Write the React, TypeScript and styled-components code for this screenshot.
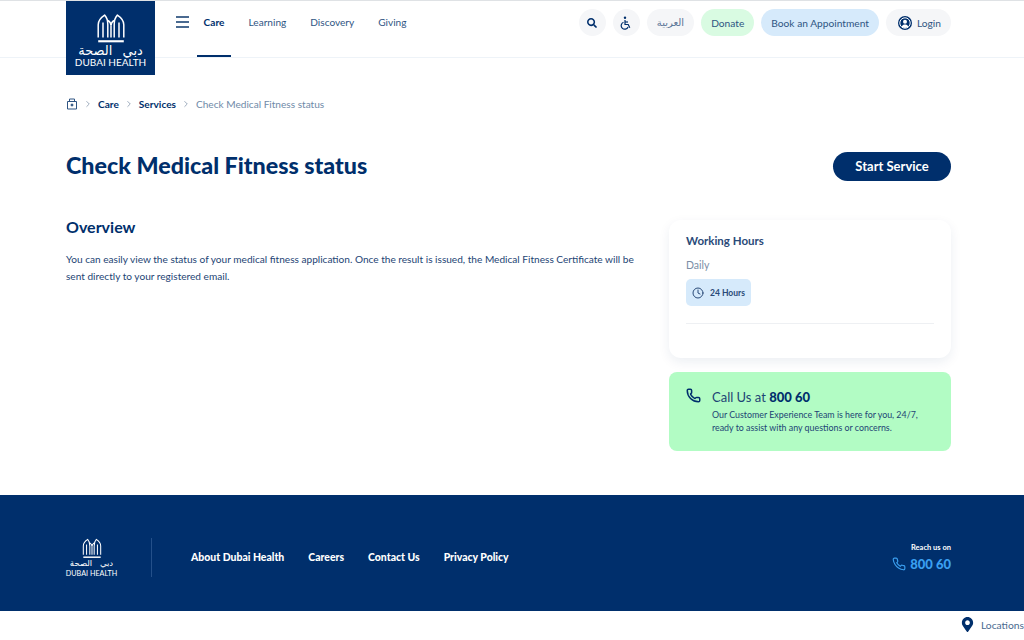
import styled, { createGlobalStyle } from "styled-components";
import { FaSearch, FaMapMarkerAlt } from "react-icons/fa";
import { FiPhone, FiClock, FiChevronRight } from "react-icons/fi";
import { Phone } from "lucide-react";

const navy = "#002f6c";

const GlobalStyle = createGlobalStyle`
  html, body { margin: 0; padding: 0; background: #fff; }
  body { font-family: Lato, "Noto Sans", "DejaVu Sans", sans-serif; color: ${navy}; }
  * { box-sizing: border-box; }
`;

// arches from the logo, same drawing in header and footer
const LogoMark = ({ width }: { width: number }) => (
  <svg width={width} viewBox="0 0 30 29" fill="none" stroke="currentColor" strokeWidth="1.4">
    <path d="M3 23V11c0-4 3-7 6-9 2 2 3 5 3 9v12" />
    <path d="M27 23V11c0-4-3-7-6-9-2 2-3 5-3 9v12" />
    <path d="M12 7c2 1 3 3 3 5 0-2 1-4 3-5" />
    <path d="M15 12v11M7.5 23V9M22.5 23V9" />
    <path d="M3 26.5h24" strokeWidth="2" />
  </svg>
);

const Page = styled.div`
  width: 1024px;
  height: 640px;
  overflow: hidden;
  display: flex;
  flex-direction: column;
`;

const Header = styled.header`
  height: 58px;
  flex: none;
  display: flex;
  align-items: flex-start;
  padding: 0 73px 0 66px;
  border-top: 1px solid #dfe2e5;
  border-bottom: 1px solid #eef3f8;
`;

const Logo = styled.div`
  width: 89px;
  height: 74px;
  flex: none;
  background: ${navy};
  color: #fff;
  display: flex;
  flex-direction: column;
  align-items: center;
  padding-top: 12px;
  position: relative;
  z-index: 1;
`;

const LogoArabic = styled.span`
  font-family: "DejaVu Sans", sans-serif;
  font-size: 13px;
  word-spacing: 6px;
  line-height: 12px;
  margin-top: 1px;
  white-space: nowrap;
`;

const LogoLatin = styled.span`
  font-size: 10px;
  font-weight: 400;
  line-height: 11px;
  white-space: nowrap;
`;

const Burger = styled.div`
  width: 13px;
  margin: 15px 0 0 21px;
  display: flex;
  flex-direction: column;
  gap: 3.5px;
  span {
    height: 1.5px;
    background: #4a6a90;
  }
`;

const Nav = styled.nav`
  display: flex;
  margin-left: 8px;
  gap: 24px;
  height: 56px;
`;

const NavItem = styled.a<{ $active?: boolean }>`
  width: ${(p) => (p.$active ? "34px" : "auto")};
  margin-right: ${(p) => (p.$active ? "-6.5px" : "0")};
  text-align: center;
  font-size: 10.1px;
  line-height: 42px;
  height: 56px;
  font-weight: ${(p) => (p.$active ? 700 : 400)};
  color: ${(p) => (p.$active ? navy : "#2f5583")};
  border-bottom: ${(p) => (p.$active ? `2px solid ${navy}` : "none")};
`;

const Actions = styled.div`
  margin-left: auto;
  margin-top: 8px;
  display: flex;
  align-items: center;
  gap: 7px;
`;

const Pill = styled.a<{ $bg?: string; $square?: boolean }>`
  height: 27px;
  min-width: 27px;
  padding: 0 ${(p) => (p.$square ? "0" : "10px")};
  border-radius: 14px;
  background: ${(p) => p.$bg || "#f5f6f8"};
  display: flex;
  align-items: center;
  justify-content: center;
  gap: 5px;
  font-size: 10.2px;
  color: #2f5583;
  white-space: nowrap;
`;

const LoginPill = styled(Pill)`
  padding: 0 10px 0 12px;
`;

const ArabicLabel = styled.span`
  font-family: "DejaVu Sans", sans-serif;
  font-size: 10px;
  color: #5a7597;
`;

const UserIcon = styled.span`
  width: 14px;
  height: 14px;
  border-radius: 50%;
  background: ${navy};
  display: flex;
  color: #fff;
`;

const Main = styled.main`
  flex: 1;
  padding: 0 73px 0 66px;
  display: flex;
  flex-direction: column;
`;

const Crumbs = styled.div`
  margin-top: 39px;
  height: 14px;
  display: flex;
  align-items: center;
  gap: 5px;
  font-size: 10.1px;
  font-weight: 700;
  color: ${navy};
`;

const Sep = styled.span`
  display: flex;
  color: #8a9bb0;
`;

const CrumbCurrent = styled.span`
  font-weight: 400;
  color: #6f8aa8;
`;

const TitleRow = styled.div`
  margin-top: 40px;
  display: flex;
  align-items: center;
  justify-content: space-between;
`;

const Title = styled.h1`
  margin: 0;
  padding-bottom: 2px;
  font-size: 23.25px;
  line-height: 28px;
  font-weight: 900;
`;

const StartButton = styled.a`
  width: 118px;
  height: 29px;
  border-radius: 15px;
  background: ${navy};
  color: #fff;
  font-size: 13px;
  font-weight: 700;
  display: flex;
  align-items: center;
  justify-content: center;
`;

const Columns = styled.div`
  margin-top: 39px;
  display: flex;
  justify-content: space-between;
`;

const Overview = styled.section`
  width: 575px;
  margin-top: -3px;
`;

const OverviewTitle = styled.h2`
  margin: 0;
  font-size: 16px;
  line-height: 20px;
  font-weight: 700;
`;

const Paragraph = styled.p`
  margin: 14px 0 0;
  font-size: 10.1px;
  line-height: 17px;
  color: #1d4474;
`;

const Side = styled.aside`
  width: 282px;
  display: flex;
  flex-direction: column;
  gap: 14px;
`;

const HoursCard = styled.div`
  height: 138px;
  padding: 14px 17px 0;
  border-radius: 12px;
  background: #fff;
  box-shadow: 0 4px 12px rgba(0, 47, 108, 0.08);
`;

const CardTitle = styled.div`
  font-size: 11.5px;
  line-height: 14px;
  font-weight: 700;
  color: #2a4a78;
`;

const Daily = styled.div`
  margin-top: 10px;
  font-size: 10.5px;
  line-height: 14px;
  color: #7b8ea6;
`;

const HoursTag = styled.div`
  margin-top: 7px;
  width: 65px;
  height: 27px;
  border-radius: 5px;
  background: #d6eafb;
  display: flex;
  align-items: center;
  justify-content: center;
  gap: 6px;
  font-size: 8.5px;
  font-weight: 700;
  color: #2a4a78;
`;

const Divider = styled.div`
  margin-top: 17px;
  height: 1px;
  background: #eef0f3;
`;

const CallCard = styled.div`
  height: 79px;
  padding: 16px 17px 0;
  border-radius: 8px;
  background: #b2fcc4;
  display: flex;
  gap: 11px;
`;

const CallBody = styled.div`
  display: flex;
  flex-direction: column;
`;

const CallTitle = styled.div`
  font-size: 13px;
  line-height: 18px;
  color: #1d4474;
  strong {
    font-weight: 900;
    color: ${navy};
  }
`;

const CallText = styled.div`
  margin-top: 3px;
  font-size: 8.85px;
  line-height: 12.5px;
  color: #1d4474;
`;

const Footer = styled.footer`
  height: 116px;
  flex: none;
  background: ${navy};
  color: #fff;
  padding: 43px 73px 0 66px;
  display: flex;
  align-items: flex-start;
`;

const FooterLogo = styled.div`
  width: 86px;
  height: 39px;
  padding-right: 34px;
  border-right: 1px solid #24508a;
  display: flex;
  flex-direction: column;
  align-items: center;
`;

const FooterArabic = styled.span`
  font-family: "DejaVu Sans", sans-serif;
  font-size: 8.5px;
  word-spacing: 5px;
  line-height: 8px;
  margin-top: 0;
  white-space: nowrap;
`;

const FooterLatin = styled.span`
  font-size: 7.2px;
  font-weight: 400;
  line-height: 7px;
  margin-top: 3px;
  white-space: nowrap;
`;

const FooterLinks = styled.nav`
  margin-left: 39px;
  display: flex;
  gap: 24px;
  font-size: 10.45px;
  font-weight: 900;
  line-height: 38px;
`;

const Reach = styled.div`
  margin-left: auto;
  margin-top: 5px;
  display: flex;
  flex-direction: column;
  align-items: flex-end;
`;

const ReachLabel = styled.span`
  font-size: 7.5px;
  line-height: 10px;
  font-weight: 700;
`;

const ReachNumber = styled.span`
  margin-top: 2px;
  display: flex;
  align-items: center;
  gap: 4px;
  font-size: 13px;
  line-height: 18px;
  font-weight: 900;
  color: #3a9ff0;
`;

const LocationsBar = styled.div`
  height: 29px;
  flex: none;
  padding-bottom: 2px;
  display: flex;
  align-items: center;
  justify-content: flex-end;
  gap: 6px;
  font-size: 10.3px;
  color: #4a6a90;
`;

const App = () => (
  <Page>
    <GlobalStyle />
    <Header>
      <Logo>
        <LogoMark width={32} />
        <LogoArabic>دبي الصحة</LogoArabic>
        <LogoLatin>DUBAI HEALTH</LogoLatin>
      </Logo>
      <Burger>
        <span />
        <span />
        <span />
      </Burger>
      <Nav>
        <NavItem $active>Care</NavItem>
        <NavItem>Learning</NavItem>
        <NavItem>Discovery</NavItem>
        <NavItem>Giving</NavItem>
      </Nav>
      <Actions>
        <Pill $square>
          <FaSearch size={10} color={navy} />
        </Pill>
        <Pill $square>
          <svg width="14" height="14" viewBox="0 0 14 14" fill="none" stroke={navy} strokeWidth="1.2">
            <circle cx="6" cy="1.8" r="1.2" fill={navy} stroke="none" />
            <path d="M6 4v4.5h3.2l1.6 3.2" />
            <path d="M6 6h3" />
            <path d="M4.5 6.2a3.6 3.6 0 1 0 4.6 4.8" />
          </svg>
        </Pill>
        <Pill>
          <ArabicLabel>العربية</ArabicLabel>
        </Pill>
        <Pill $bg="#d9fbe2">Donate</Pill>
        <Pill $bg="#d6eafb">Book an Appointment</Pill>
        <LoginPill>
          <UserIcon>
            <svg viewBox="0 0 14 14" width="14" height="14" fill="currentColor">
              <circle cx="7" cy="7" r="5.2" fill="none" stroke="currentColor" strokeWidth="1" />
              <circle cx="7" cy="5.8" r="2" />
              <path d="M3.6 10.6c.7-1.6 2-2.2 3.4-2.2s2.7.6 3.4 2.2C9.4 11.6 8.2 12 7 12s-2.4-.4-3.4-1.4z" />
            </svg>
          </UserIcon>
          Login
        </LoginPill>
      </Actions>
    </Header>
    <Main>
      <Crumbs>
        <svg width="12" height="12" viewBox="0 0 12 12" fill="none" stroke="#2f5583" strokeWidth="1">
          <path d="M1.5 3.5h9v7.5h-9z" />
          <path d="M3.5 3.5V1h5v2.5" />
          <circle cx="6" cy="7" r="1" fill="#2f5583" />
        </svg>
        <Sep>
          <FiChevronRight size={10} />
        </Sep>
        <span>Care</span>
        <Sep>
          <FiChevronRight size={10} />
        </Sep>
        <span>Services</span>
        <Sep>
          <FiChevronRight size={10} />
        </Sep>
        <CrumbCurrent>Check Medical Fitness status</CrumbCurrent>
      </Crumbs>
      <TitleRow>
        <Title>Check Medical Fitness status</Title>
        <StartButton>Start Service</StartButton>
      </TitleRow>
      <Columns>
        <Overview>
          <OverviewTitle>Overview</OverviewTitle>
          <Paragraph>
            You can easily view the status of your medical fitness application. Once the result is issued, the Medical
            Fitness Certificate will be sent directly to your registered email.
          </Paragraph>
        </Overview>
        <Side>
          <HoursCard>
            <CardTitle>Working Hours</CardTitle>
            <Daily>Daily</Daily>
            <HoursTag>
              <FiClock size={12} />
              24 Hours
            </HoursTag>
            <Divider />
          </HoursCard>
          <CallCard>
            <Phone size={15} strokeWidth={2.4} />
            <CallBody>
              <CallTitle>
                Call Us at <strong>800 60</strong>
              </CallTitle>
              <CallText>
                Our Customer Experience Team is here for you, 24/7,
                <br />
                ready to assist with any questions or concerns.
              </CallText>
            </CallBody>
          </CallCard>
        </Side>
      </Columns>
    </Main>
    <Footer>
      <FooterLogo>
        <LogoMark width={22} />
        <FooterArabic>دبي الصحة</FooterArabic>
        <FooterLatin>DUBAI HEALTH</FooterLatin>
      </FooterLogo>
      <FooterLinks>
        <a>About Dubai Health</a>
        <a>Careers</a>
        <a>Contact Us</a>
        <a>Privacy Policy</a>
      </FooterLinks>
      <Reach>
        <ReachLabel>Reach us on</ReachLabel>
        <ReachNumber>
          <FiPhone size={14} />
          800 60
        </ReachNumber>
      </Reach>
    </Footer>
    <LocationsBar>
      <FaMapMarkerAlt size={15} color={navy} />
      Locations
    </LocationsBar>
  </Page>
);

export default App;
